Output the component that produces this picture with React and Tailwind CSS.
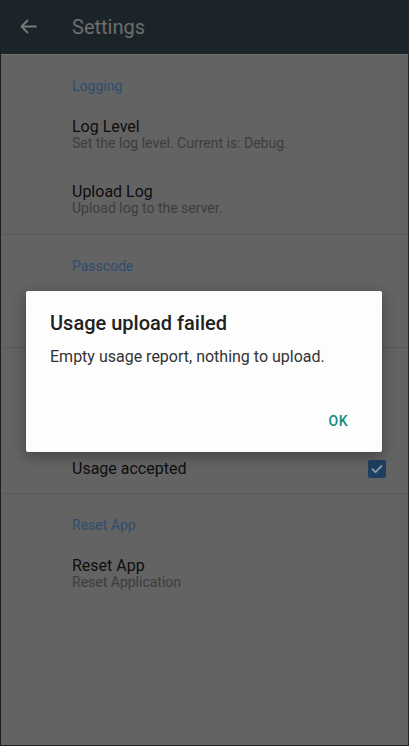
import React from "react";

const listFont = { fontFamily: "Roboto, 'Noto Sans', sans-serif" };

const SectionLabel = ({ children }) => (
  <div className="h-[49px] pl-[71px] pt-[21px] text-[14px] leading-[20px] text-[#2e4e70]">
    {children}
  </div>
);

const Item = ({ title, subtitle, h = "h-[65px]" }) => (
  <div className={`${h} pl-[71px] pt-[13px] overflow-hidden`}>
    <div className="text-[16px] leading-[20px] text-[#0e0e0e]">{title}</div>
    <div className="-mt-[2px] text-[14px] leading-[17px] text-[#3d3d3d]">{subtitle}</div>
  </div>
);

const Divider = () => <div className="h-px bg-[#595959]" />;

export default function App() {
  return (
    <div
      className="relative w-[409px] h-[746px] overflow-hidden border border-t-0 border-[#1f1f1f] bg-[#636363]"
      style={listFont}
    >
      {/* App bar */}
      <header className="h-[54px] bg-[#1b2529] flex items-center">
        <svg width="55" height="54" viewBox="0 0 55 54" className="shrink-0">
          <path
            d="M35 26.5H20.5M26.5 20.5l-6 6 6 6"
            fill="none"
            stroke="#7a7a7a"
            strokeWidth="1.8"
            strokeLinecap="round"
            strokeLinejoin="round"
          />
        </svg>
        <h1 className="ml-[16px] text-[20px] text-[#6e6e6e]">Settings</h1>
      </header>
      <div className="h-px bg-[#6f6f6f]" />

      {/* Logging */}
      <SectionLabel>Logging</SectionLabel>
      <Item title="Log Level" subtitle="Set the log level. Current is: Debug." />
      <Item title="Upload Log" subtitle="Upload log to the server." />
      <Divider />

      {/* Passcode */}
      <SectionLabel>Passcode</SectionLabel>
      <Item h="h-[63px]" title="Change Passcode" subtitle="Change the app passcode." />
      <Divider />

      {/* Usage */}
      <SectionLabel>Usage</SectionLabel>
      <div className="pl-[71px] h-[48px] flex items-center text-[16px] text-[#0e0e0e]">
        Upload Usage
      </div>
      <div className="pl-[71px] pr-[22px] h-[48px] flex items-center justify-between">
        <span className="text-[16px] text-[#0e0e0e]">Usage accepted</span>
        <span className="w-[18px] h-[18px] rounded-[2px] bg-[#1f3f60] flex items-center justify-center">
          <svg width="14" height="14" viewBox="0 0 14 14">
            <path
              d="M2.5 7.2l3 3 6-6.2"
              fill="none"
              stroke="#8c99a8"
              strokeWidth="1.8"
              strokeLinecap="round"
              strokeLinejoin="round"
            />
          </svg>
        </span>
      </div>
      <Divider />

      {/* Reset */}
      <SectionLabel>Reset App</SectionLabel>
      <Item title="Reset App" subtitle="Reset Application" />

      {/* Dialog */}
      <div
        className="absolute left-[25px] top-[291px] w-[356px] h-[161px] bg-[#fdfdfd] rounded-[2px] shadow-[0_4px_14px_rgba(0,0,0,0.35)] flex flex-col"
        style={{ fontFamily: "Roboto, sans-serif" }}
      >
        <div className="pl-[24px] pt-[19px] text-[20px] leading-[26px] font-medium text-[#212121]">
          Usage upload failed
        </div>
        <div className="pl-[24px] pt-[10px] text-[16px] leading-[22px] text-[#333333]">
          Empty usage report, nothing to upload.
        </div>
        <div className="mt-auto flex justify-end pr-[34px] pb-[21px]">
          <span className="text-[14px] leading-[20px] font-medium tracking-[0.5px] text-[#138a80]">OK</span>
        </div>
      </div>
    </div>
  );
}
